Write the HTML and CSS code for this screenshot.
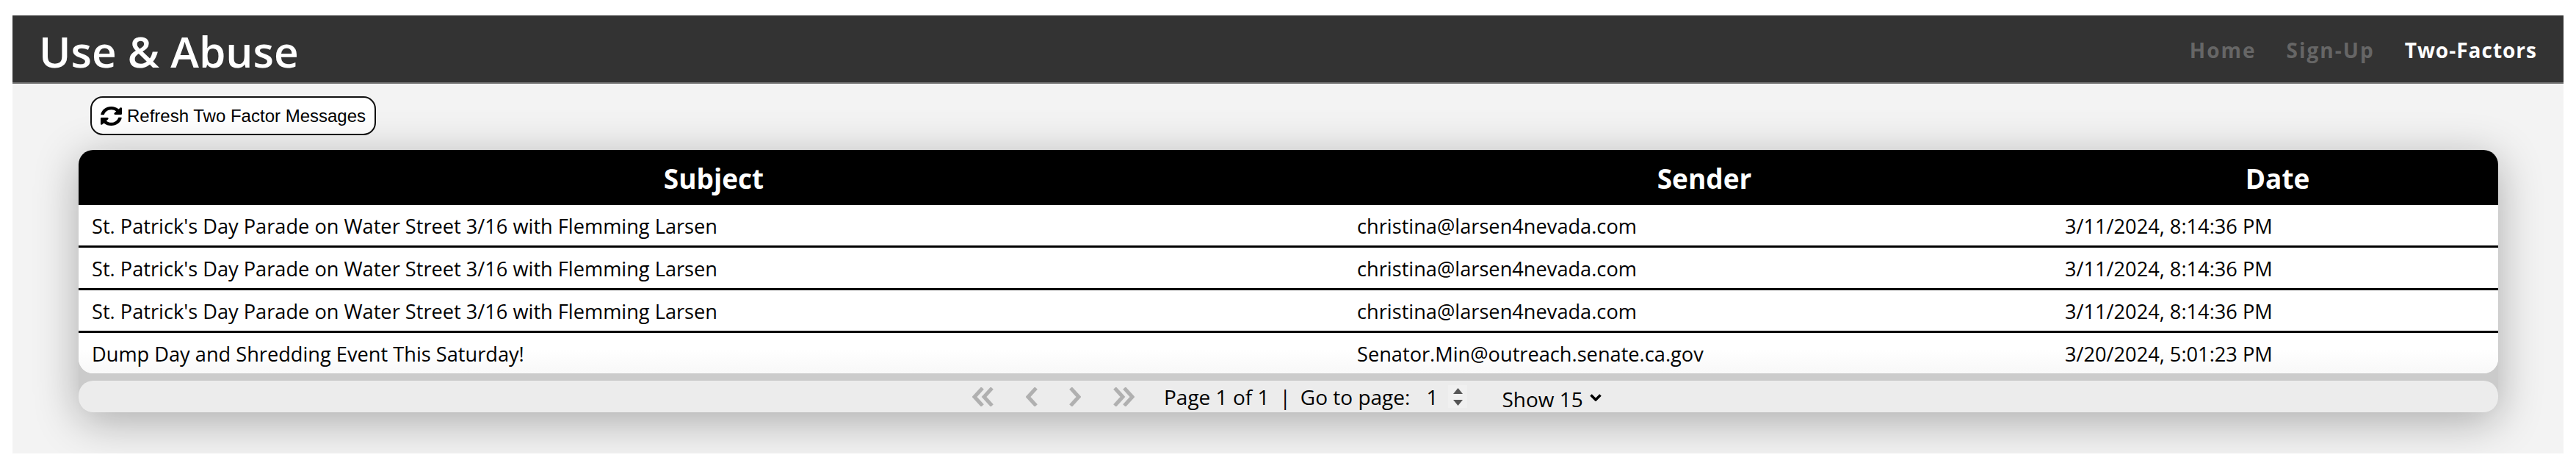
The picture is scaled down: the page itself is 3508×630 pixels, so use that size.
FILE: index.html
```html
<!DOCTYPE html>
<html lang="en">
<head>
  <meta charset="UTF-8">
  <title>Use &amp; Abuse</title>
  <link rel="stylesheet" href="styles.css">
</head>
<body>
  <div class="app">
    <header class="topbar">
      <h1 class="brand">Use &amp; Abuse</h1>
      <nav class="nav">
        <a href="#">Home</a>
        <a href="#">Sign-Up</a>
        <a href="#" class="active">Two-Factors</a>
      </nav>
    </header>

    <main class="content">
      <button class="refresh-btn">
        <svg class="refresh-icon" viewBox="8 8 496 496" preserveAspectRatio="none"><path d="M370.700 133.300C339.500 104 298.900 88 256 88c-77.400 0-144.300 53.100-162.700 126.800-1.300 5.400-6.100 9.200-11.700 9.200H24.100c-7.500 0-13.200-6.800-11.800-14.200C33.900 94.900 134.800 8 256 8c66.400 0 126.800 26.100 171.300 68.700L463 41c15.100-15.100 41-4.400 41 17v134c0 13.300-10.700 24-24 24H346c-21.400 0-32.100-25.900-17-41l41.700-41.700zM32 296h134c21.400 0 32.100 25.900 17 41l-41.700 41.700c31.200 29.300 71.800 45.300 114.700 45.300 77.400 0 144.300-53.100 162.700-126.800 1.300-5.400 6.100-9.200 11.700-9.200h57.500c7.500 0 13.200 6.800 11.800 14.200C478.100 417.100 377.200 504 256 504c-66.400 0-126.800-26.100-171.300-68.700L49 471c-15.100 15.100-41 4.400-41-17V320c0-13.300 10.700-24 24-24z"/></svg>
        <span>Refresh Two Factor Messages</span>
      </button>

      <div class="table-wrap">
        <table class="messages">
          <colgroup>
            <col class="col-subject">
            <col class="col-sender">
            <col class="col-date">
          </colgroup>
          <thead>
            <tr><th>Subject</th><th class="th-sender">Sender</th><th>Date</th></tr>
          </thead>
          <tbody>
            <tr>
              <td>St. Patrick's Day Parade on Water Street 3/16 with Flemming Larsen</td>
              <td>christina@larsen4nevada.com</td>
              <td>3/11/2024, 8:14:36 PM</td>
            </tr>
            <tr>
              <td>St. Patrick's Day Parade on Water Street 3/16 with Flemming Larsen</td>
              <td>christina@larsen4nevada.com</td>
              <td>3/11/2024, 8:14:36 PM</td>
            </tr>
            <tr>
              <td>St. Patrick's Day Parade on Water Street 3/16 with Flemming Larsen</td>
              <td>christina@larsen4nevada.com</td>
              <td>3/11/2024, 8:14:36 PM</td>
            </tr>
            <tr>
              <td>Dump Day and Shredding Event This Saturday!</td>
              <td>Senator.Min@outreach.senate.ca.gov</td>
              <td>3/20/2024, 5:01:23 PM</td>
            </tr>
          </tbody>
        </table>

        <div class="pager">
          <div class="pager-arrows">
            <svg class="arrow arrow-double" viewBox="0 0 30 26"><path d="M14 1 3 13l11 12M27 1 16 13l11 12"/></svg>
            <svg class="arrow arrow-single" viewBox="0 0 16 26"><path d="M14 1 3 13l11 12"/></svg>
            <svg class="arrow arrow-single" viewBox="0 0 16 26"><path d="M2 1l11 12L2 25"/></svg>
            <svg class="arrow arrow-double" viewBox="0 0 30 26"><path d="M3 1l11 12L3 25M16 1l11 12-11 12"/></svg>
          </div>
          <span class="page-of">Page 1 of 1</span>
          <span class="sep">|</span>
          <span class="goto">Go to page:</span>
          <span class="page-input">1</span>
          <span class="spinner-box">
            <svg class="spinner" viewBox="0 0 13 24"><path d="M6.500 0 13 8H0zM6.500 24 0 16h13z"/></svg>
          </span>
          <span class="show">Show 15
            <svg class="show-caret" viewBox="0 0 16 10"><path d="M1.500 1.500 8 8l6.500-6.500"/></svg>
          </span>
        </div>
      </div>
    </main>
  </div>
</body>
</html>
```

FILE: styles.css
```css
body {
  margin: 0;
  background: #fff;
  font-family: 'Open Sans', sans-serif;
  color: #000;
}

.app {
  margin: 21px 17px 13px;
  height: 596px;
  background: #f3f3f3;
  overflow: hidden;
}

.topbar {
  height: 91px;
  background: #333;
  border-bottom: 2px solid #777;
  display: flex;
  justify-content: space-between;
  align-items: center;
  padding: 0 36px;
}

.brand {
  margin: 6px 0 0;
  color: #fff;
  font-size: 58.5px;
  font-weight: 600;
  line-height: 1;
}

.nav {
  display: flex;
  gap: 41px;
  margin-top: 2px;
  font-size: 28px;
  font-weight: 700;
}

.nav a {
  color: #666;
  text-decoration: none;
  letter-spacing: 2px;
}

.nav a.active {
  color: #fff;
  letter-spacing: 1px;
}

.content {
  padding: 17px 89px 0 90px;
}

.refresh-btn {
  display: flex;
  align-items: center;
  gap: 7px;
  box-sizing: border-box;
  height: 53px;
  width: 389px;
  margin-left: 16px;
  padding: 0 0 0 12px;
  background: #fff;
  border: 2px solid #111;
  border-radius: 17px;
  font-family: 'Liberation Sans', sans-serif;
  font-size: 24px;
  color: #000;
  white-space: nowrap;
}

.refresh-icon {
  width: 29px;
  height: 26px;
  flex: none;
}

.table-wrap {
  margin-top: 20px;
  border-radius: 20px;
  box-shadow: 0 12px 60px rgba(0, 0, 0, 0.3);
  background: #cbcbcb;
}

.messages {
  width: 100%;
  table-layout: fixed;
  border-collapse: separate;
  border-spacing: 0;
  background: #fff;
  border-radius: 20px;
  overflow: hidden;
  font-size: 27.2px;
}

.col-sender {
  width: 964px;
}

.col-date {
  width: 608px;
}

.messages th {
  height: 75px;
  padding: 2px 0 0 7px;
  box-sizing: border-box;
  background: #000;
  color: #fff;
  font-size: 37px;
  font-weight: 700;
}

.messages th.th-sender {
  padding-left: 18px;
}

.messages td {
  height: 52px;
  padding: 3px 0 0 18px;
  border-bottom: 3px solid #000;
  line-height: 52px;
  vertical-align: top;
}

.messages tbody tr:last-child td {
  border-bottom: 0;
  background: linear-gradient(#fff 40%, #f8f8f8);
}

.pager {
  display: flex;
  align-items: center;
  height: 43px;
  margin-top: 10px;
  padding-left: 1217px;
  background: #ececec;
  border-radius: 20px;
  font-size: 28px;
}

.pager-arrows {
  display: flex;
  align-items: center;
  gap: 43px;
  margin-right: 40px;
}

.arrow {
  height: 26px;
  fill: none;
  stroke: #b0b0b0;
  stroke-width: 5;
}

.arrow-double {
  width: 30px;
}

.arrow-single {
  width: 16px;
}

.sep {
  margin: 0 13px 0 14px;
}

.page-input {
  margin-left: 22px;
}

.spinner-box {
  display: flex;
  align-items: center;
  justify-content: center;
  width: 26px;
  height: 31px;
  margin-left: 14px;
  background: #f0f0f0;
}

.spinner {
  width: 13px;
  height: 24px;
  fill: #555;
}

.show {
  display: flex;
  align-items: center;
  gap: 9px;
  margin-left: 47px;
  padding-top: 6px;
}

.show-caret {
  width: 16px;
  height: 10px;
  margin-top: -3px;
  fill: none;
  stroke: #000;
  stroke-width: 3.5;
}
```
